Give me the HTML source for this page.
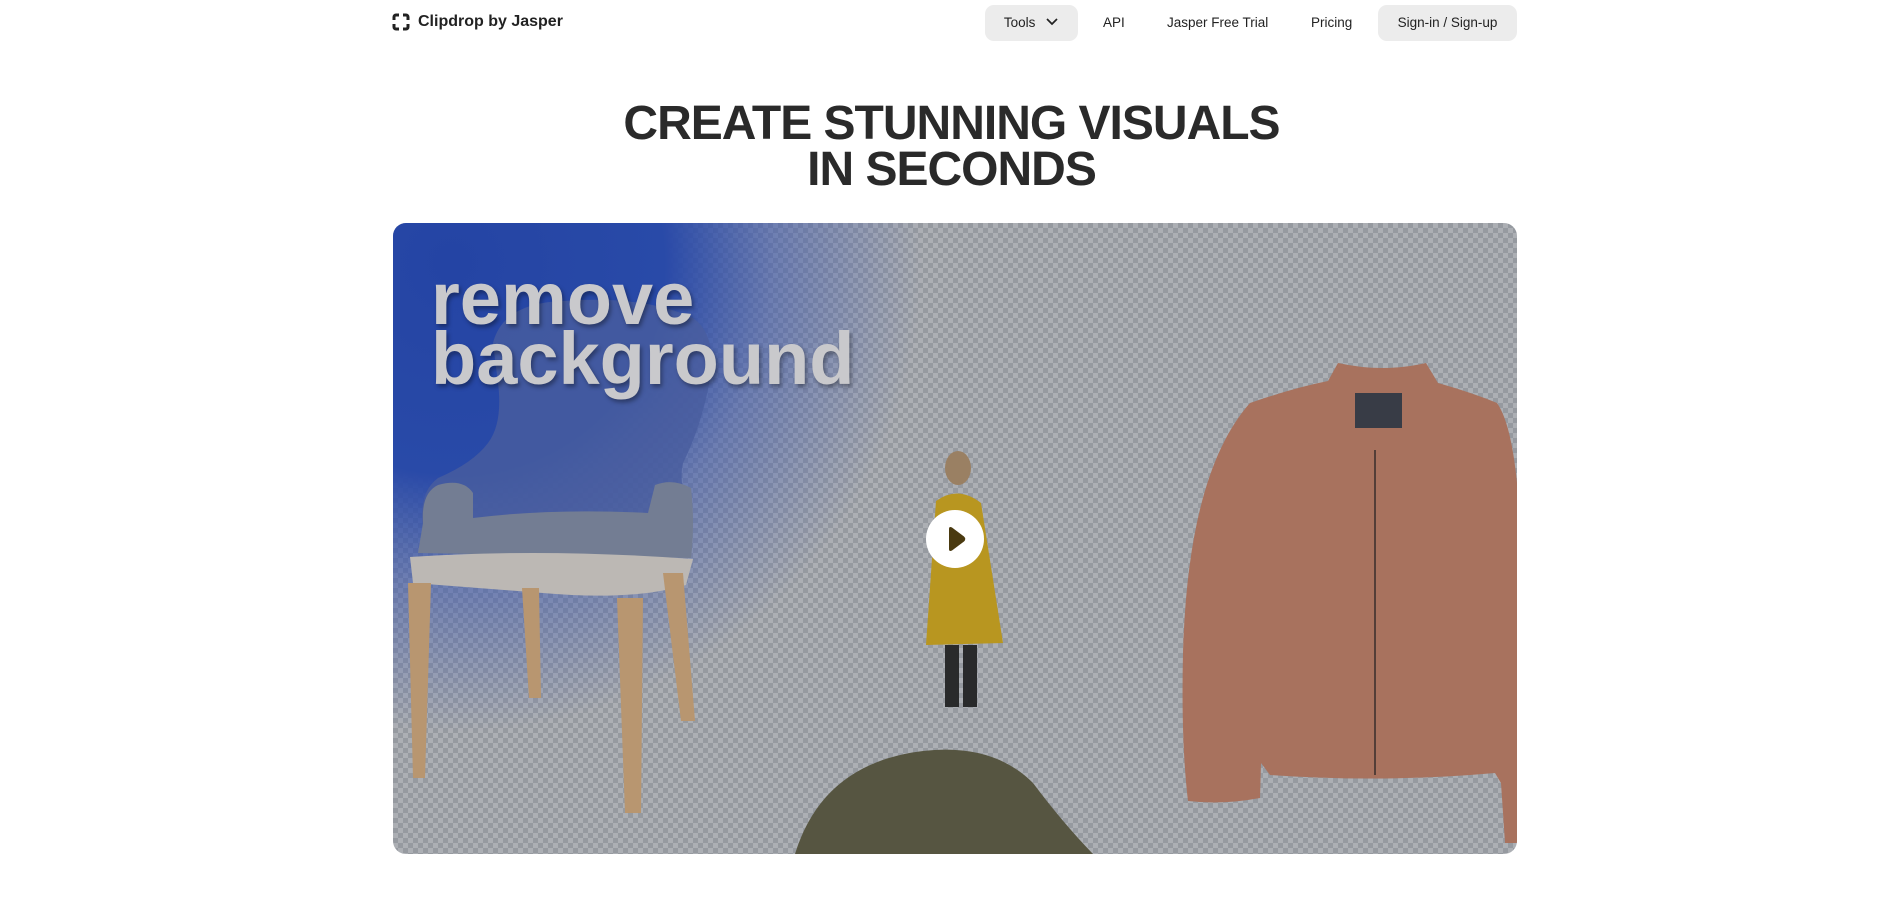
<!DOCTYPE html>
<html><head><meta charset="utf-8"><style>
*{margin:0;padding:0;box-sizing:border-box}
body{width:1903px;height:904px;background:#fff;font-family:"Liberation Sans",sans-serif;color:#222;position:relative;overflow:hidden}
.logo{position:absolute;left:392px;top:13px;display:flex;align-items:center;gap:8px;font-size:16px;font-weight:700;color:#222}
.nav{position:absolute;top:5px;font-size:13.5px;color:#222;height:36px;line-height:36px}
.btn{background:#ececec;border-radius:9px;text-align:center}
h1{position:absolute;left:0;width:1903px;top:101px;text-align:center;font-size:48px;line-height:46px;font-weight:700;letter-spacing:-1px;color:#2a2a2a}
.hero{position:absolute;left:393px;top:223px;width:1124px;height:631px;border-radius:13px;overflow:hidden;
background:repeating-conic-gradient(#a3a6ac 0 25%,#bcbec2 0 50%) 0 0/10px 10px}
.blue{position:absolute;inset:0;background:radial-gradient(ellipse 470px 470px at 60px 40px,#2447b0 0%,#2a4db5 45%,rgba(60,90,190,.55) 68%,rgba(120,140,200,0) 100%)}
.dark{position:absolute;inset:0;background:rgba(40,45,60,.1)}
.rb{position:absolute;left:38px;top:46px;font-size:74px;line-height:60px;font-weight:700;color:#c9c9cc;letter-spacing:0;text-shadow:2px 3px 4px rgba(0,0,0,.35)}
.play{position:absolute;left:533px;top:287px;width:58px;height:58px;border-radius:50%;background:#fff}
</style></head><body>
<div class="logo"><svg width="18" height="18" viewBox="0 0 18 18" fill="none" stroke="#222" stroke-width="3"><path d="M2 7V4a2 2 0 0 1 2-2h3M11 2h3a2 2 0 0 1 2 2v3M16 11v3a2 2 0 0 1-2 2h-3M7 16H4a2 2 0 0 1-2-2v-3"/></svg><span>Clipdrop <span style="font-weight:600">by Jasper</span></span></div>
<div class="nav btn" style="left:985px;width:93px">Tools <svg width="14" height="10" viewBox="0 0 14 10" style="margin-left:6px"><path d="M2 2l5 5 5-5" stroke="#222" stroke-width="1.7" fill="none"/></svg></div>
<div class="nav" style="left:1103px">API</div>
<div class="nav" style="left:1167px">Jasper Free Trial</div>
<div class="nav" style="left:1311px">Pricing</div>
<div class="nav btn" style="left:1378px;width:139px">Sign-in / Sign-up</div>
<h1>CREATE STUNNING VISUALS<br>IN SECONDS</h1>
<div class="hero">
<div class="blue"></div>
<svg width="1124" height="631" style="position:absolute;left:0;top:0">
<!-- chair back -->
<path d="M100 120 Q110 80 170 78 Q250 72 300 95 Q322 110 318 150 Q310 200 290 240 Q285 260 298 300 L30 305 Q25 270 45 255 Q80 240 95 220 Q110 200 105 160Z" fill="#4d63aa" opacity=".8"/>
<!-- arms and seat -->
<path d="M30 300 Q28 270 45 262 Q70 255 80 270 L80 295 Q160 285 255 290 L262 262 Q280 255 298 265 Q302 300 298 335 L25 330Z" fill="#7c869d"/>
<path d="M17 334 Q150 325 300 336 L293 362 Q240 378 150 370 L20 360Z" fill="#cdc8c2"/>
<path d="M15 360 L38 360 L32 555 L20 555Z M224 375 L250 375 L248 590 L232 590Z M129 365 L146 365 L148 475 L136 475Z M270 350 L290 350 L302 498 L288 498Z" fill="#c9a277"/>
<!-- girl -->
<ellipse cx="565" cy="245" rx="13" ry="17" fill="#a88a68"/>
<path d="M543 278 Q565 262 588 280 L610 420 L533 422Z" fill="#c9a21e"/>
<path d="M552 422 h14 v62 h-14Z M570 422 h14 v62 h-14Z" fill="#2a2a2a"/>
<!-- rock -->
<path d="M402 631 Q430 540 530 528 Q600 520 640 560 Q670 600 700 631Z" fill="#5c5a42"/>
<!-- jacket -->
<path d="M945 140 Q990 150 1033 140 L1045 160 Q1080 170 1104 180 Q1118 200 1124 260 L1124 620 L1112 620 L1108 560 L1102 550 Q990 560 877 552 L868 540 L867 575 Q830 582 795 578 Q788 520 790 430 Q795 250 857 180 Q900 165 935 158Z" fill="#b77a62"/>
<rect x="962" y="170" width="47" height="35" fill="#3a3e48"/>
<path d="M982 227 V552" stroke="#5a4038" stroke-width="2"/>
</svg>
<div class="dark"></div>
<div class="rb">remove<br>background</div>
<div class="play"><svg width="58" height="58" viewBox="0 0 58 58"><path d="M23 19 Q23 16 26 17.5 L38 26.5 Q40.5 29 38 31.5 L26 40.5 Q23 42 23 39Z" fill="#4a3a10"/></svg></div>
</div>
</body></html>
